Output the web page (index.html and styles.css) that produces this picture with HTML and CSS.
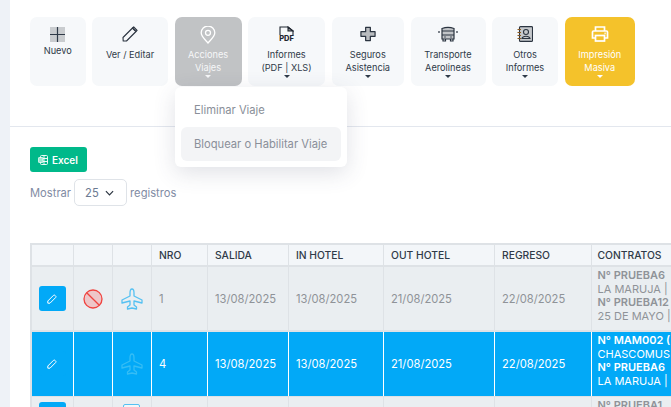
FILE: index.html
```html
<!DOCTYPE html>
<html lang="es">
<head>
<meta charset="utf-8">
<title>Viajes</title>
<link rel="stylesheet" href="styles.css">
</head>
<body>
<main class="card">
  <section class="toolbar">
    <div class="tool w-nuevo">
      <svg class="ic-nuevo" viewBox="0 0 15 15"><rect width="15" height="15" fill="#c9cccf"/><path d="M7.5 0V15M0 7.5H15" stroke="#2f3a48" stroke-width="1.2"/></svg>
      <span>Nuevo</span>
    </div>
    <div class="tool w-ver">
      <svg class="ic" viewBox="0 0 16 16" fill="none" stroke="#2b3440" stroke-width="1.1" stroke-linejoin="round"><path d="M1 11.5 10.5 2l3.5 3.5L4.5 15H1.2z"/><path d="M10.5 2l1.2-1.1 3.4 3.400L14 5.500z" fill="#b5b8bb"/></svg>
      <span>Ver / Editar</span>
    </div>
    <div class="tool w-acc active">
      <svg class="ic-pin" viewBox="0 0 16 18" fill="none" stroke="#fff" stroke-width="1.300"><path d="M8 17C4.500 13 1.200 10.300 1.200 6.800a6.800 6.800 0 0 1 13.600 0C14.800 10.300 11.500 13 8 17z"/><circle cx="8" cy="6.800" r="2.500"/></svg>
      <span class="after-pin">Acciones<br>Viajes</span><i class="caret"></i>
    </div>
    <div class="tool w-inf">
      <div class="ic-pdf">
        <svg viewBox="0 0 15 9" fill="none" stroke="#1f2630" stroke-width="1.100"><path d="M1 9V1h8L14 5v4"/><path d="M9 1l5 4H9z" fill="#8a8d90"/></svg>
        <b>PDF</b>
      </div>
      <span>Informes<br>(PDF | XLS)</span><i class="caret"></i>
    </div>
    <div class="tool w-seg">
      <svg class="ic" viewBox="0 0 17 16"><path d="M6 1h5v4.500h5v5h-5V15H6v-4.500H1v-5h5z" fill="#b9bcbf" stroke="#2b3440" stroke-width="1.300" stroke-linejoin="round"/></svg>
      <span>Seguros<br>Asistencia</span><i class="caret"></i>
    </div>
    <div class="tool w-tra">
      <svg class="ic-wide" viewBox="0 0 20 16" fill="none" stroke="#2b3440" stroke-width="1.200"><path d="M4 2.500Q10 .2 16 2.500V13H4z" fill="#c2c5c8"/><path d="M4 5h12M4 9h12"/><path d="M5 13v2h2.500v-2M12.500 13v2H15v-2"/><path d="M1 5v2M19 5v2"/><path d="M6.500 11h1M12.500 11h1" stroke-width="1.500"/></svg>
      <span>Transporte<br>Aerolineas</span><i class="caret"></i>
    </div>
    <div class="tool w-otr">
      <svg class="ic" viewBox="0 0 16 16" fill="none" stroke="#2b3440" stroke-width="1.100"><rect x="2.500" y=".6" width="13" height="14.800" rx="1" fill="#c6c9cc"/><circle cx="9" cy="6" r="2.500"/><path d="M5 12.500c.8-3 7.200-3 8 0z"/><path d="M.5 3.500h3.500M.5 6.500h3.500M.5 9.500h3.500M.5 12.500h3.500" stroke="#8a5a20"/></svg>
      <span>Otros<br>Informes</span><i class="caret"></i>
    </div>
    <div class="tool w-imp gold">
      <svg class="ic-wide" viewBox="0 0 18 16" fill="none" stroke="#fff" stroke-width="1.700"><path d="M4.500 5V1h9v4"/><path d="M4.500 12H1.500V6q0-1 1-1h13q1 0 1 1v6h-3"/><rect x="4.500" y="9.500" width="9" height="5.500"/><path d="M13.500 7.300h1.200"/></svg>
      <span>Impresión<br>Masiva</span><i class="caret"></i>
    </div>
    <nav class="menu">
      <a class="menu-item">Eliminar Viaje</a>
      <a class="menu-item current">Bloquear o Habilitar Viaje</a>
    </nav>
  </section>

  <hr class="divider">

  <section class="controls">
    <button class="excel" type="button">
      <svg viewBox="0 0 10 10" fill="none" stroke="#fff" stroke-width=".9"><rect x="2.500" y=".5" width="7" height="9" rx="1"/><path d="M2.500 3.500h7M2.500 6.500h7M6 .5v9"/><rect x=".5" y="2.500" width="4.500" height="5" rx=".6" fill="#9fe6d2" stroke="#fff" stroke-width=".7"/></svg>
      Excel
    </button>
    <div class="length">
      <span>Mostrar</span>
      <div class="select">25
        <svg viewBox="0 0 10 6" fill="none" stroke="#2b3440" stroke-width="1.300"><path d="M1 1l4 4 4-4"/></svg>
      </div>
      <span>registros</span>
    </div>
  </section>

  <div class="table-wrap">
    <table>
      <colgroup>
        <col class="c1"><col class="c2"><col class="c3"><col class="c4"><col class="c5"><col class="c6"><col class="c7"><col class="c8"><col class="c9">
      </colgroup>
      <thead>
        <tr><th></th><th></th><th></th><th>NRO</th><th>SALIDA</th><th>IN HOTEL</th><th>OUT HOTEL</th><th>REGRESO</th><th class="contract-head">CONTRATOS</th></tr>
      </thead>
      <tbody>
        <tr class="muted">
          <td class="center"><span class="edit"><svg viewBox="0 0 10 10" fill="none" stroke="#fff" stroke-width="1"><path d="M.8 7 6.500 1.300q.7-.7 1.400 0l.8.8q.7.7 0 1.400L3 9.200H.8z"/></svg></span></td>
          <td class="center"><svg class="ban" viewBox="0 0 20 20"><circle cx="10" cy="10" r="9" fill="#eec6c8" stroke="#f0433f" stroke-width="1.300"/><path d="M3.700 3.700 16.300 16.300" stroke="#f0433f" stroke-width="1.300"/></svg></td>
          <td class="center"><svg class="plane" viewBox="0 0 22 22" fill="none" stroke="#55c1f2" stroke-width="1.300" stroke-linejoin="round"><path d="M11 1q2 0 2 4v3l8 4v3l-8-2v4l2.500 2v2L11 20l-4.500 1v-2L9 17v-4l-8 2v-3l8-4V5q0-4 2-4z"/></svg></td>
          <td>1</td><td>13/08/2025</td><td>13/08/2025</td><td>21/08/2025</td><td>22/08/2025</td>
          <td class="contract"><b>N° PRUEBA6</b><br>LA MARUJA |<br><b>N° PRUEBA12</b><br>25 DE MAYO |</td>
        </tr>
        <tr class="selected">
          <td class="center"><span class="edit"><svg viewBox="0 0 10 10" fill="none" stroke="#fff" stroke-width="1"><path d="M.8 7 6.500 1.300q.7-.7 1.400 0l.8.8q.7.7 0 1.400L3 9.200H.8z"/></svg></span></td>
          <td class="center"></td>
          <td class="center"><svg class="plane" viewBox="0 0 22 22" fill="none" stroke="#35bdf5" stroke-width="1.300" stroke-linejoin="round"><path d="M11 1q2 0 2 4v3l8 4v3l-8-2v4l2.500 2v2L11 20l-4.500 1v-2L9 17v-4l-8 2v-3l8-4V5q0-4 2-4z"/></svg></td>
          <td>4</td><td>13/08/2025</td><td>13/08/2025</td><td>21/08/2025</td><td>22/08/2025</td>
          <td class="contract"><b>N° MAM002 (</b><br>CHASCOMUS<br><b>N° PRUEBA6</b><br>LA MARUJA |</td>
        </tr>
        <tr class="muted">
          <td class="center top"><span class="edit"></span></td>
          <td></td>
          <td class="center top"><span class="doc"></span></td>
          <td></td><td></td><td></td><td></td><td></td>
          <td class="contract"><b>N° PRUEBA1</b></td>
        </tr>
      </tbody>
    </table>
  </div>
</main>
</body>
</html>
```
FILE: styles.css
```css
* { box-sizing: border-box; }
html, body { height: 100%; }
body {
  margin: 0;
  background: #eef2f7;
  overflow: hidden;
  font-family: "Inter", "Liberation Sans", sans-serif;
  color: #2b3440;
}
.card {
  margin-left: 10px;
  height: 100%;
  background: #fff;
  padding: 17px 0 0 20px;
  overflow: hidden;
}
.toolbar {
  position: relative;
  display: flex;
  gap: 6.5px;
  height: 69px;
}
.tool {
  height: 69px;
  border-radius: 7px;
  background: #f6f8fa;
  padding-top: 9px;
  display: flex;
  flex-direction: column;
  align-items: center;
  text-align: center;
  font-size: 9.2px;
  line-height: 13px;
  color: #2f3a48;
}
.tool span { display: block; margin-top: 6px; }
.tool .after-pin { margin-top: 4px; }
.w-nuevo { width: 55.5px; }
.w-nuevo span { margin-top: 2px; }
.w-ver { width: 76px; }
.w-acc { width: 67px; }
.w-inf { width: 77px; }
.w-seg { width: 72.5px; }
.w-tra { width: 75px; }
.w-otr { width: 66px; }
.w-imp { width: 70.5px; }
.active { background: #c1c3c5; color: #f6f7f8; }
.gold { background: #f4c22b; color: #fff; }
.ic { width: 16px; height: 16px; flex: none; }
.ic-pin { width: 16px; height: 18px; flex: none; }
.ic-wide { width: 20px; height: 16px; flex: none; }
.ic-nuevo { width: 15px; height: 15px; flex: none; margin-top: 1px; }
.ic-pdf { height: 16px; width: 16px; display: flex; flex-direction: column; align-items: center; flex: none; }
.ic-pdf svg { width: 15px; height: 9px; flex: none; }
.ic-pdf b { font-size: 7.500px; line-height: 7px; font-weight: 800; color: #1f2630; }
.caret {
  width: 0;
  height: 0;
  margin-top: 1px;
  border-left: 3px solid transparent;
  border-right: 3px solid transparent;
  border-top: 3px solid currentColor;
}
.menu {
  position: absolute;
  left: 145px;
  top: 70px;
  width: 172px;
  height: 80px;
  padding: 6px;
  background: #fff;
  border-radius: 6px;
  box-shadow: 0 6px 22px rgba(60, 70, 100, .16);
  display: flex;
  flex-direction: column;
  font-size: 11.200px;
  color: #8a8f99;
}
.menu-item { height: 34px; padding-left: 13px; display: flex; align-items: center; border-radius: 6px; }
.current { background: #f3f4f6; }
.divider { height: 1px; border: 0; margin: 40px 0 0 -20px; background: #e3e7ee; }
.controls { padding-top: 20px; }
.excel {
  display: flex;
  align-items: center;
  gap: 4px;
  width: 57px;
  height: 25px;
  padding: 0 0 0 8px;
  border: 0;
  border-radius: 3px;
  background: #00b98a;
  color: #fff;
  font: 600 10px "Inter", sans-serif;
}
.excel svg { width: 10px; height: 10px; }
.length {
  margin-top: 7px;
  display: flex;
  align-items: center;
  gap: 3px;
  height: 27px;
  font-size: 11.200px;
  color: #7f8ba3;
}
.select {
  width: 53px;
  height: 27px;
  border: 1px solid #dfe3e8;
  border-radius: 5px;
  display: flex;
  align-items: center;
  justify-content: space-between;
  padding: 0 12px 0 10px;
  color: #6c7a91;
}
.select svg { width: 9px; height: 6px; }
.table-wrap { margin-top: 37px; overflow: hidden; }
table {
  border-collapse: collapse;
  table-layout: fixed;
  width: 740px;
  font-size: 11.200px;
  border-top: 2px solid #dee2e6;
  border-left: 2px solid #dee2e6;
}
.c1 { width: 42px; } .c2 { width: 39px; } .c3 { width: 39px; } .c4 { width: 56px; }
.c5 { width: 81px; } .c6 { width: 95px; } .c7 { width: 111px; } .c8 { width: 97px; } .c9 { width: 180px; }
th {
  height: 22px;
  padding: 0 7.500px;
  background: #f3f6f9;
  border: 1px solid #dee2e6;
  border-bottom: 2px solid #dee2e6;
  border-top: 0;
  text-align: left;
  font-size: 10.300px;
  font-weight: 500;
  color: #2f3a48;
}
th.contract-head { padding-left: 6px; }
td {
  height: 65px;
  padding: 0 7.500px;
  border: 1px solid #dee2e6;
  white-space: nowrap;
}
.center { padding: 0; text-align: center; }
.top { vertical-align: top; padding-top: 5px; }
.muted td { background: #eaeef1; color: #8f9398; border-bottom: 2px solid #dee2e6; }
.selected td { background: #02a9f7; color: #fff; border-color: #fff; border-top-color: #02a9f7; border-bottom-color: #dee2e6; }
td.contract { font-size: 11px; line-height: 13.600px; overflow: hidden; vertical-align: top; padding: 2px 0 0 6px; }
.contract b { font-weight: 600; }
.edit {
  display: inline-flex;
  align-items: center;
  justify-content: center;
  width: 27px;
  height: 25px;
  border-radius: 3px;
  background: #02a9f7;
  vertical-align: middle;
}
.edit svg { width: 10px; height: 10px; }
.ban { width: 20px; height: 20px; vertical-align: middle; }
.plane { width: 22px; height: 22px; vertical-align: middle; }
.doc {
  display: inline-block;
  width: 17px;
  height: 14px;
  margin-top: 2px;
  background: #f3f6f9;
  border: 1.500px solid #55c1f2;
  border-radius: 2px;
}
```
